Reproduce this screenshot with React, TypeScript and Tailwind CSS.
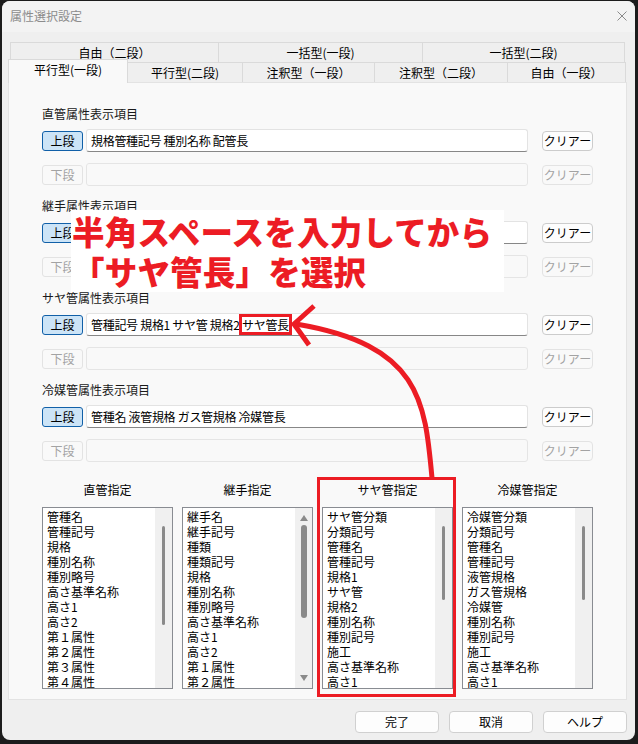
import React from 'react';

const sections = [
  { title: '直管属性表示項目', text: '規格管種記号 種別名称 配管長' },
  { title: '継手属性表示項目', text: '' },
  { title: 'サヤ管属性表示項目', text: '管種記号 規格1 サヤ管 規格2', mark: 'サヤ管長' },
  { title: '冷媒管属性表示項目', text: '管種名 液管規格 ガス管規格 冷媒管長' },
];

const lists = [
  {
    title: '直管指定',
    items: ['管種名', '管種記号', '規格', '種別名称', '種別略号', '高さ基準名称', '高さ1', '高さ2', '第１属性', '第２属性', '第３属性', '第４属性'],
    thumb: 'h-[99px]',
    wide: false,
  },
  {
    title: '継手指定',
    items: ['継手名', '継手記号', '種類', '種類記号', '規格', '種別名称', '種別略号', '高さ基準名称', '高さ1', '高さ2', '第１属性', '第２属性'],
    thumb: 'h-[93px]',
    wide: true,
  },
  {
    title: 'サヤ管指定',
    items: ['サヤ管分類', '分類記号', '管種名', '管種記号', '規格1', 'サヤ管', '規格2', '種別名称', '種別記号', '施工', '高さ基準名称', '高さ1'],
    thumb: 'h-[74px]',
    wide: false,
  },
  {
    title: '冷媒管指定',
    items: ['冷媒管分類', '分類記号', '管種名', '管種記号', '液管規格', 'ガス管規格', '冷媒管', '種別名称', '種別記号', '施工', '高さ基準名称', '高さ1'],
    thumb: 'h-[74px]',
    wide: false,
  },
];

export default function App() {
  return (
    <div className="relative h-[744px] w-[638px] overflow-hidden bg-[#1c1c1c] pt-px pr-[3px] pb-[4px] pl-[2px] font-['Noto_Sans_CJK_JP',sans-serif] text-[12px] text-black">
      <div className="flex h-full flex-col overflow-hidden rounded-[8px] bg-[#efefef]">
        <TitleBar />
        <div className="flex flex-1 flex-col pt-[10px] pr-[8px] pl-[6px]">
          <Tabs />
          <div className="flex h-[618px] flex-col border border-[#e3e3e3] bg-[#f9f9f9] pt-[23px] pl-[33px]">
            {sections.map((s, i) => (
              <Section key={s.title} title={s.title} text={s.text} mark={s.mark} last={i === sections.length - 1} />
            ))}
            <div className="mt-[20px] flex gap-[9px]">
              {lists.map((l) => (
                <ListColumn key={l.title} {...l} />
              ))}
            </div>
          </div>
          <div className="mt-[11px] flex justify-end gap-[10px]">
            <DialogButton label="完了" />
            <DialogButton label="取消" />
            <DialogButton label="ヘルプ" />
          </div>
        </div>
      </div>

      {/* annotation overlay */}
      <div className="absolute top-[210px] left-[71px] h-[82px] w-[433px] bg-white pt-[1px] pl-[1px] text-[32.5px] leading-[40px] font-black tracking-[0.2px] whitespace-nowrap text-[#ec1c24]">
        <p>半角スペースを入力してから</p>
        <p>「サヤ管長」を選択</p>
      </div>
      <svg className="pointer-events-none absolute inset-0" width="638" height="744" viewBox="0 0 638 744">
        <rect x="318.5" y="478.5" width="136" height="217" fill="none" stroke="#ec1c24" strokeWidth="3" />
        <path d="M432 478 C425 400 420 345 296 324" fill="none" stroke="#ec1c24" strokeWidth="5" />
        <path d="M314 306 L294 324 L309 345" fill="none" stroke="#ec1c24" strokeWidth="5" />
      </svg>
    </div>
  );
}

function TitleBar() {
  return (
    <div className="flex h-[31px] items-center justify-between bg-[#f3f3f3] pr-[8px] pb-[2px] pl-[8px]">
      <p className="text-[12px] leading-[16px] text-[#8c8c8c]">属性選択設定</p>
      <svg width="10" height="10" viewBox="0 0 10 10">
        <path d="M0.5 0.5 L9.5 9.5 M9.5 0.5 L0.5 9.5" stroke="#8a8a8a" strokeWidth="1" />
      </svg>
    </div>
  );
}

function Tabs() {
  return (
    <div className="flex flex-col">
      <div className="flex pl-[2px]">
        <div className="flex h-[20px] w-[209px] items-center justify-center border-x border-t border-[#dadada] leading-[16px]">自由（二段）</div>
        <div className="flex h-[20px] w-[204px] items-center justify-center border-t border-r border-[#dadada] leading-[16px]">一括型(一段)</div>
        <div className="flex h-[20px] w-[202px] items-center justify-center border-t border-r border-[#dadada] leading-[16px]">一括型(二段)</div>
      </div>
      <div className="-mt-[3px] flex h-[23px] items-end">
        <div className="relative z-10 -mb-px flex h-[24px] w-[120px] items-start justify-center border-x border-t border-[#dadada] bg-[#f9f9f9] pt-[2px] leading-[16px]">
          平行型(一段)
        </div>
        <div className="flex h-[20px] w-[115px] items-center justify-center border-t border-r border-[#dadada] leading-[16px]">平行型(二段)</div>
        <div className="flex h-[20px] w-[132px] items-center justify-center border-t border-r border-[#dadada] leading-[16px]">注釈型（一段）</div>
        <div className="flex h-[20px] w-[133px] items-center justify-center border-t border-r border-[#dadada] leading-[16px]">注釈型（二段）</div>
        <div className="flex h-[20px] w-[118px] items-center justify-center border-t border-r border-[#dadada] leading-[16px]">自由（一段）</div>
      </div>
    </div>
  );
}

function Section({ title, text, mark, last }: { title: string; text: string; mark?: string; last: boolean }) {
  return (
    <div className={last ? 'flex flex-col' : 'flex flex-col pb-[12px]'}>
      <p className="h-[16px] leading-[16px] text-[#1a1a1a]">{title}</p>
      <div className="mt-[7px] flex h-[23px] items-center">
        <button className="h-[20px] w-[41px] rounded-[3px] border border-[#1160a8] bg-[#cce4f7] leading-[16px]">上段</button>
        <div className="ml-[3px] flex h-[23px] w-[442px] items-center rounded-[3px] border border-[#e3e3e3] border-b-[#878787] bg-white pl-[4px] leading-[15px] tracking-[-0.3px] whitespace-pre">
          {text}
          {mark && (
            <>
              {' '}
              <span className="inline-block h-[15px] leading-[15px] outline-3 outline-[#ec1c24]">{mark}</span>
            </>
          )}
        </div>
        <button className="ml-[14px] h-[20px] w-[51px] rounded-[4px] border border-[#cccccc] bg-[#fdfdfd] leading-[16px]">クリアー</button>
      </div>
      <div className="mt-[11px] flex h-[23px] items-center">
        <button className="h-[20px] w-[41px] rounded-[3px] border border-[#e3e3e3] bg-[#f9f9f9] leading-[16px] text-[#a3a3a3]">下段</button>
        <div className="ml-[3px] h-[23px] w-[442px] rounded-[3px] border border-[#e5e5e5] bg-[#f9f9f9]" />
        <button className="ml-[14px] h-[20px] w-[51px] rounded-[4px] border border-[#e3e3e3] bg-[#f9f9f9] leading-[16px] text-[#a3a3a3]">クリアー</button>
      </div>
    </div>
  );
}

function ListColumn({ title, items, thumb, wide }: { title: string; items: string[]; thumb: string; wide: boolean }) {
  return (
    <div className="flex w-[131px] flex-col items-center">
      <p className="h-[16px] leading-[16px]">{title}</p>
      <div className="mt-[9px] flex h-[182px] w-[131px] overflow-hidden border border-[#898c92] bg-white">
        <div className="flex-1 pt-px pl-[4px] leading-[15px]">
          {items.map((it) => (
            <div key={it} className="whitespace-nowrap">
              {it}
            </div>
          ))}
        </div>
        {wide ? (
          <div className="flex w-[17px] flex-col items-center bg-[#f0f0f0] pt-[7px] pb-[7px]">
            <svg width="8" height="6" viewBox="0 0 8 6">
              <path d="M4 0 L8 6 L0 6 Z" fill="#8a8a8a" />
            </svg>
            <div className={`mt-[4px] w-[6px] rounded-full bg-[#8a8a8a] ${thumb}`} />
            <div className="flex-1" />
            <svg width="8" height="6" viewBox="0 0 8 6">
              <path d="M0 0 L8 0 L4 6 Z" fill="#8a8a8a" />
            </svg>
          </div>
        ) : (
          <div className="flex w-[17px] flex-col items-center bg-[#f0f0f0] pt-[18px]">
            <div className={`w-[3px] rounded-full bg-[#8a8a8a] ${thumb}`} />
          </div>
        )}
      </div>
    </div>
  );
}

function DialogButton({ label }: { label: string }) {
  return (
    <button className="h-[22px] w-[84px] rounded-[4px] border border-[#d0d0d0] bg-[#fdfdfd] leading-[16px]">{label}</button>
  );
}
